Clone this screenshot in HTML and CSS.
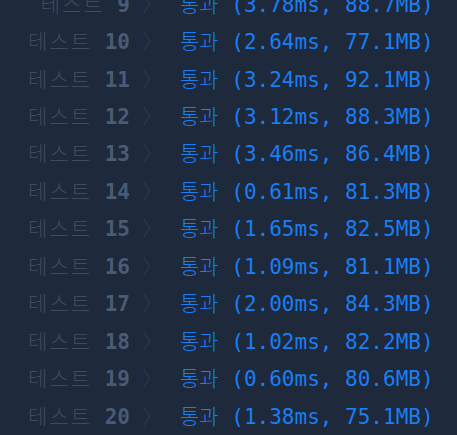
FILE: index.html
```html
<!DOCTYPE html>
<html lang="ko">
<head>
<meta charset="utf-8">
<link rel="stylesheet" href="styles.css">
</head>
<body>
<div class="results">
  <div class="row"><span class="label"><span class="word">테스트</span> <span class="num">9</span></span><span class="sep">〉</span><span class="res"><span class="ko">통과</span> (3.78ms, 88.7MB)</span></div>
  <div class="row"><span class="label"><span class="word">테스트</span> <span class="num">10</span></span><span class="sep">〉</span><span class="res"><span class="ko">통과</span> (2.64ms, 77.1MB)</span></div>
  <div class="row"><span class="label"><span class="word">테스트</span> <span class="num">11</span></span><span class="sep">〉</span><span class="res"><span class="ko">통과</span> (3.24ms, 92.1MB)</span></div>
  <div class="row"><span class="label"><span class="word">테스트</span> <span class="num">12</span></span><span class="sep">〉</span><span class="res"><span class="ko">통과</span> (3.12ms, 88.3MB)</span></div>
  <div class="row"><span class="label"><span class="word">테스트</span> <span class="num">13</span></span><span class="sep">〉</span><span class="res"><span class="ko">통과</span> (3.46ms, 86.4MB)</span></div>
  <div class="row"><span class="label"><span class="word">테스트</span> <span class="num">14</span></span><span class="sep">〉</span><span class="res"><span class="ko">통과</span> (0.61ms, 81.3MB)</span></div>
  <div class="row"><span class="label"><span class="word">테스트</span> <span class="num">15</span></span><span class="sep">〉</span><span class="res"><span class="ko">통과</span> (1.65ms, 82.5MB)</span></div>
  <div class="row"><span class="label"><span class="word">테스트</span> <span class="num">16</span></span><span class="sep">〉</span><span class="res"><span class="ko">통과</span> (1.09ms, 81.1MB)</span></div>
  <div class="row"><span class="label"><span class="word">테스트</span> <span class="num">17</span></span><span class="sep">〉</span><span class="res"><span class="ko">통과</span> (2.00ms, 84.3MB)</span></div>
  <div class="row"><span class="label"><span class="word">테스트</span> <span class="num">18</span></span><span class="sep">〉</span><span class="res"><span class="ko">통과</span> (1.02ms, 82.2MB)</span></div>
  <div class="row"><span class="label"><span class="word">테스트</span> <span class="num">19</span></span><span class="sep">〉</span><span class="res"><span class="ko">통과</span> (0.60ms, 80.6MB)</span></div>
  <div class="row"><span class="label"><span class="word">테스트</span> <span class="num">20</span></span><span class="sep">〉</span><span class="res"><span class="ko">통과</span> (1.38ms, 75.1MB)</span></div>
</div>
</body>
</html>
```

FILE: styles.css
```css
html, body {
  margin: 0;
  padding: 0;
  background: #1e293b;
  overflow: hidden;
}
.results {
  margin-top: -16px;
  font-family: "DejaVu Sans Mono", "Noto Sans CJK KR", monospace;
  font-size: 21px;
}
.row {
  display: flex;
  align-items: center;
  height: 37.45px;
  white-space: pre;
}
.label {
  width: 130px;
  text-align: right;
  flex: none;
}
.word {
  color: #3e4b5e;
  font-family: "Noto Sans CJK KR", sans-serif;
  font-weight: 300;
  font-size: 21px;
  letter-spacing: 2px;
}
.num {
  color: #4b5b73;
  font-weight: bold;
}
.sep {
  width: 50px;
  padding-left: 12px;
  box-sizing: border-box;
  flex: none;
  color: #2f3b4d;
  font-family: "Noto Sans CJK KR", sans-serif;
  font-weight: 300;
}
.res {
  color: #1a7ef4;
}
.ko {
  font-family: "Noto Sans CJK KR", sans-serif;
  font-weight: 300;
}
```
